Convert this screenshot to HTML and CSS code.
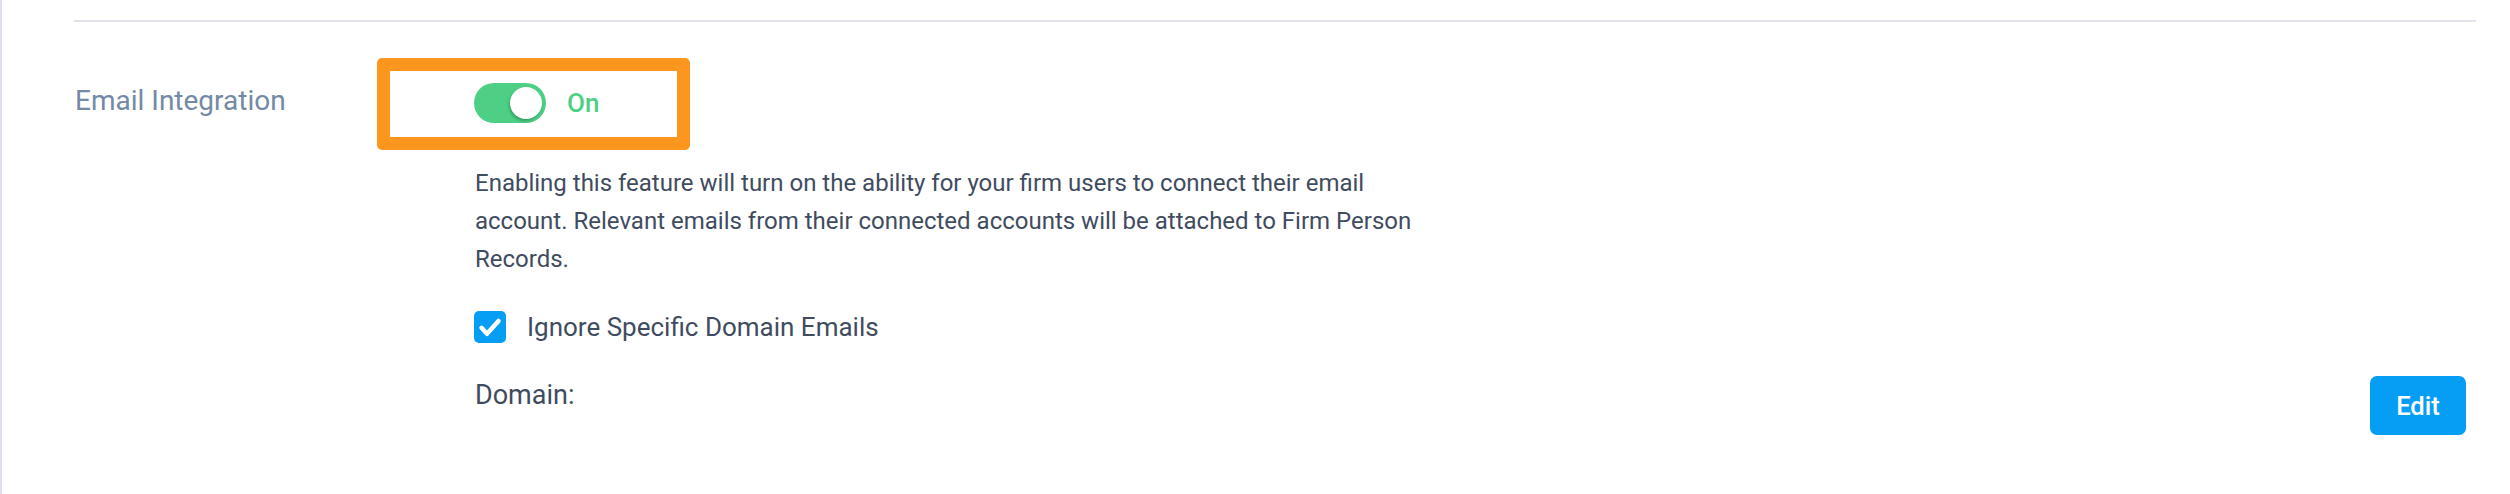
FILE: index.html
```html
<!DOCTYPE html>
<html lang="en">
<head>
<meta charset="utf-8">
<title>Email Integration</title>
<link rel="stylesheet" href="styles.css">
</head>
<body>
<div class="page">
  <div class="divider"></div>
  <div class="setting">
    <div class="setting-label">Email Integration</div>
    <div class="setting-value">
      <div class="toggle-row">
        <span class="highlight"></span>
        <span class="toggle"><span class="knob"></span></span>
        <span class="toggle-text">On</span>
      </div>
      <p class="description">Enabling this feature will turn on the ability for your firm users to connect their email account. Relevant emails from their connected accounts will be attached to Firm Person Records.</p>
      <label class="check-row">
        <span class="checkbox">
          <svg viewBox="0 0 32 32" width="32" height="32"><path d="M7.5 16.8 L13 22.8 L24.5 10" fill="none" stroke="#fff" stroke-width="4.5" stroke-linecap="round" stroke-linejoin="round"/></svg>
        </span>
        <span class="check-text">Ignore Specific Domain Emails</span>
      </label>
      <div class="domain-row">
        <span class="domain-label">Domain:</span>
        <button class="edit-btn">Edit</button>
      </div>
    </div>
  </div>
</div>
</body>
</html>
```

FILE: styles.css
```css
html, body {
  margin: 0;
  padding: 0;
  background: #ffffff;
}
body {
  font-family: Roboto, "Liberation Sans", sans-serif;
}
.page {
  border-left: 2px solid #dde0ea;
  min-height: 494px;
  box-sizing: border-box;
  padding: 20px 34px 0 72px;
}
.divider {
  height: 2px;
  background: #e1e3ec;
}
.setting {
  display: grid;
  grid-template-columns: 400px 1fr;
  padding-top: 61px;
}
.setting-label {
  font-size: 28px;
  line-height: 36px;
  color: #7389a6;
  padding-left: 1px;
}
.setting-value {
  display: flex;
  flex-direction: column;
}
.toggle-row {
  position: relative;
  display: flex;
  align-items: center;
  height: 40px;
  gap: 21px;
}
.highlight {
  position: absolute;
  left: -97px;
  top: -25px;
  width: 313px;
  height: 92px;
  box-sizing: border-box;
  border: 13px solid #fd961f;
  border-radius: 5px;
  pointer-events: none;
}
.toggle {
  position: relative;
  width: 72px;
  height: 40px;
  border-radius: 20px;
  background: #4dd085;
  flex: none;
}
.knob {
  position: absolute;
  right: 4px;
  top: 4px;
  width: 32px;
  height: 32px;
  border-radius: 50%;
  background: #ffffff;
  box-shadow: -1px 2px 3px rgba(0, 0, 0, 0.25);
}
.toggle-text {
  font-size: 26px;
  font-weight: 500;
  color: #4dd085;
  line-height: 40px;
}
.description {
  margin: 41px 0 0 0;
  max-width: 960px;
  font-size: 24px;
  line-height: 38px;
  color: #3f4c60;
  padding-left: 1px;
}
.check-row {
  display: flex;
  align-items: center;
  gap: 21px;
  margin-top: 33px;
  height: 32px;
}
.checkbox {
  width: 32px;
  height: 32px;
  border-radius: 5px;
  background: #069df5;
  display: flex;
  flex: none;
}
.check-text {
  font-size: 26px;
  line-height: 32px;
  color: #3f4c60;
}
.domain-row {
  display: flex;
  justify-content: space-between;
  align-items: flex-start;
  margin-top: 33px;
  padding-right: 10px;
}
.domain-label {
  font-size: 27px;
  line-height: 38px;
  color: #3f4c60;
  padding-left: 1px;
}
.edit-btn {
  width: 96px;
  height: 59px;
  border: none;
  border-radius: 7px;
  background: #069df5;
  color: #ffffff;
  font-family: Roboto, "Liberation Sans", sans-serif;
  font-size: 25.6px;
  font-weight: 500;
  padding: 0;
  cursor: pointer;
}
```
